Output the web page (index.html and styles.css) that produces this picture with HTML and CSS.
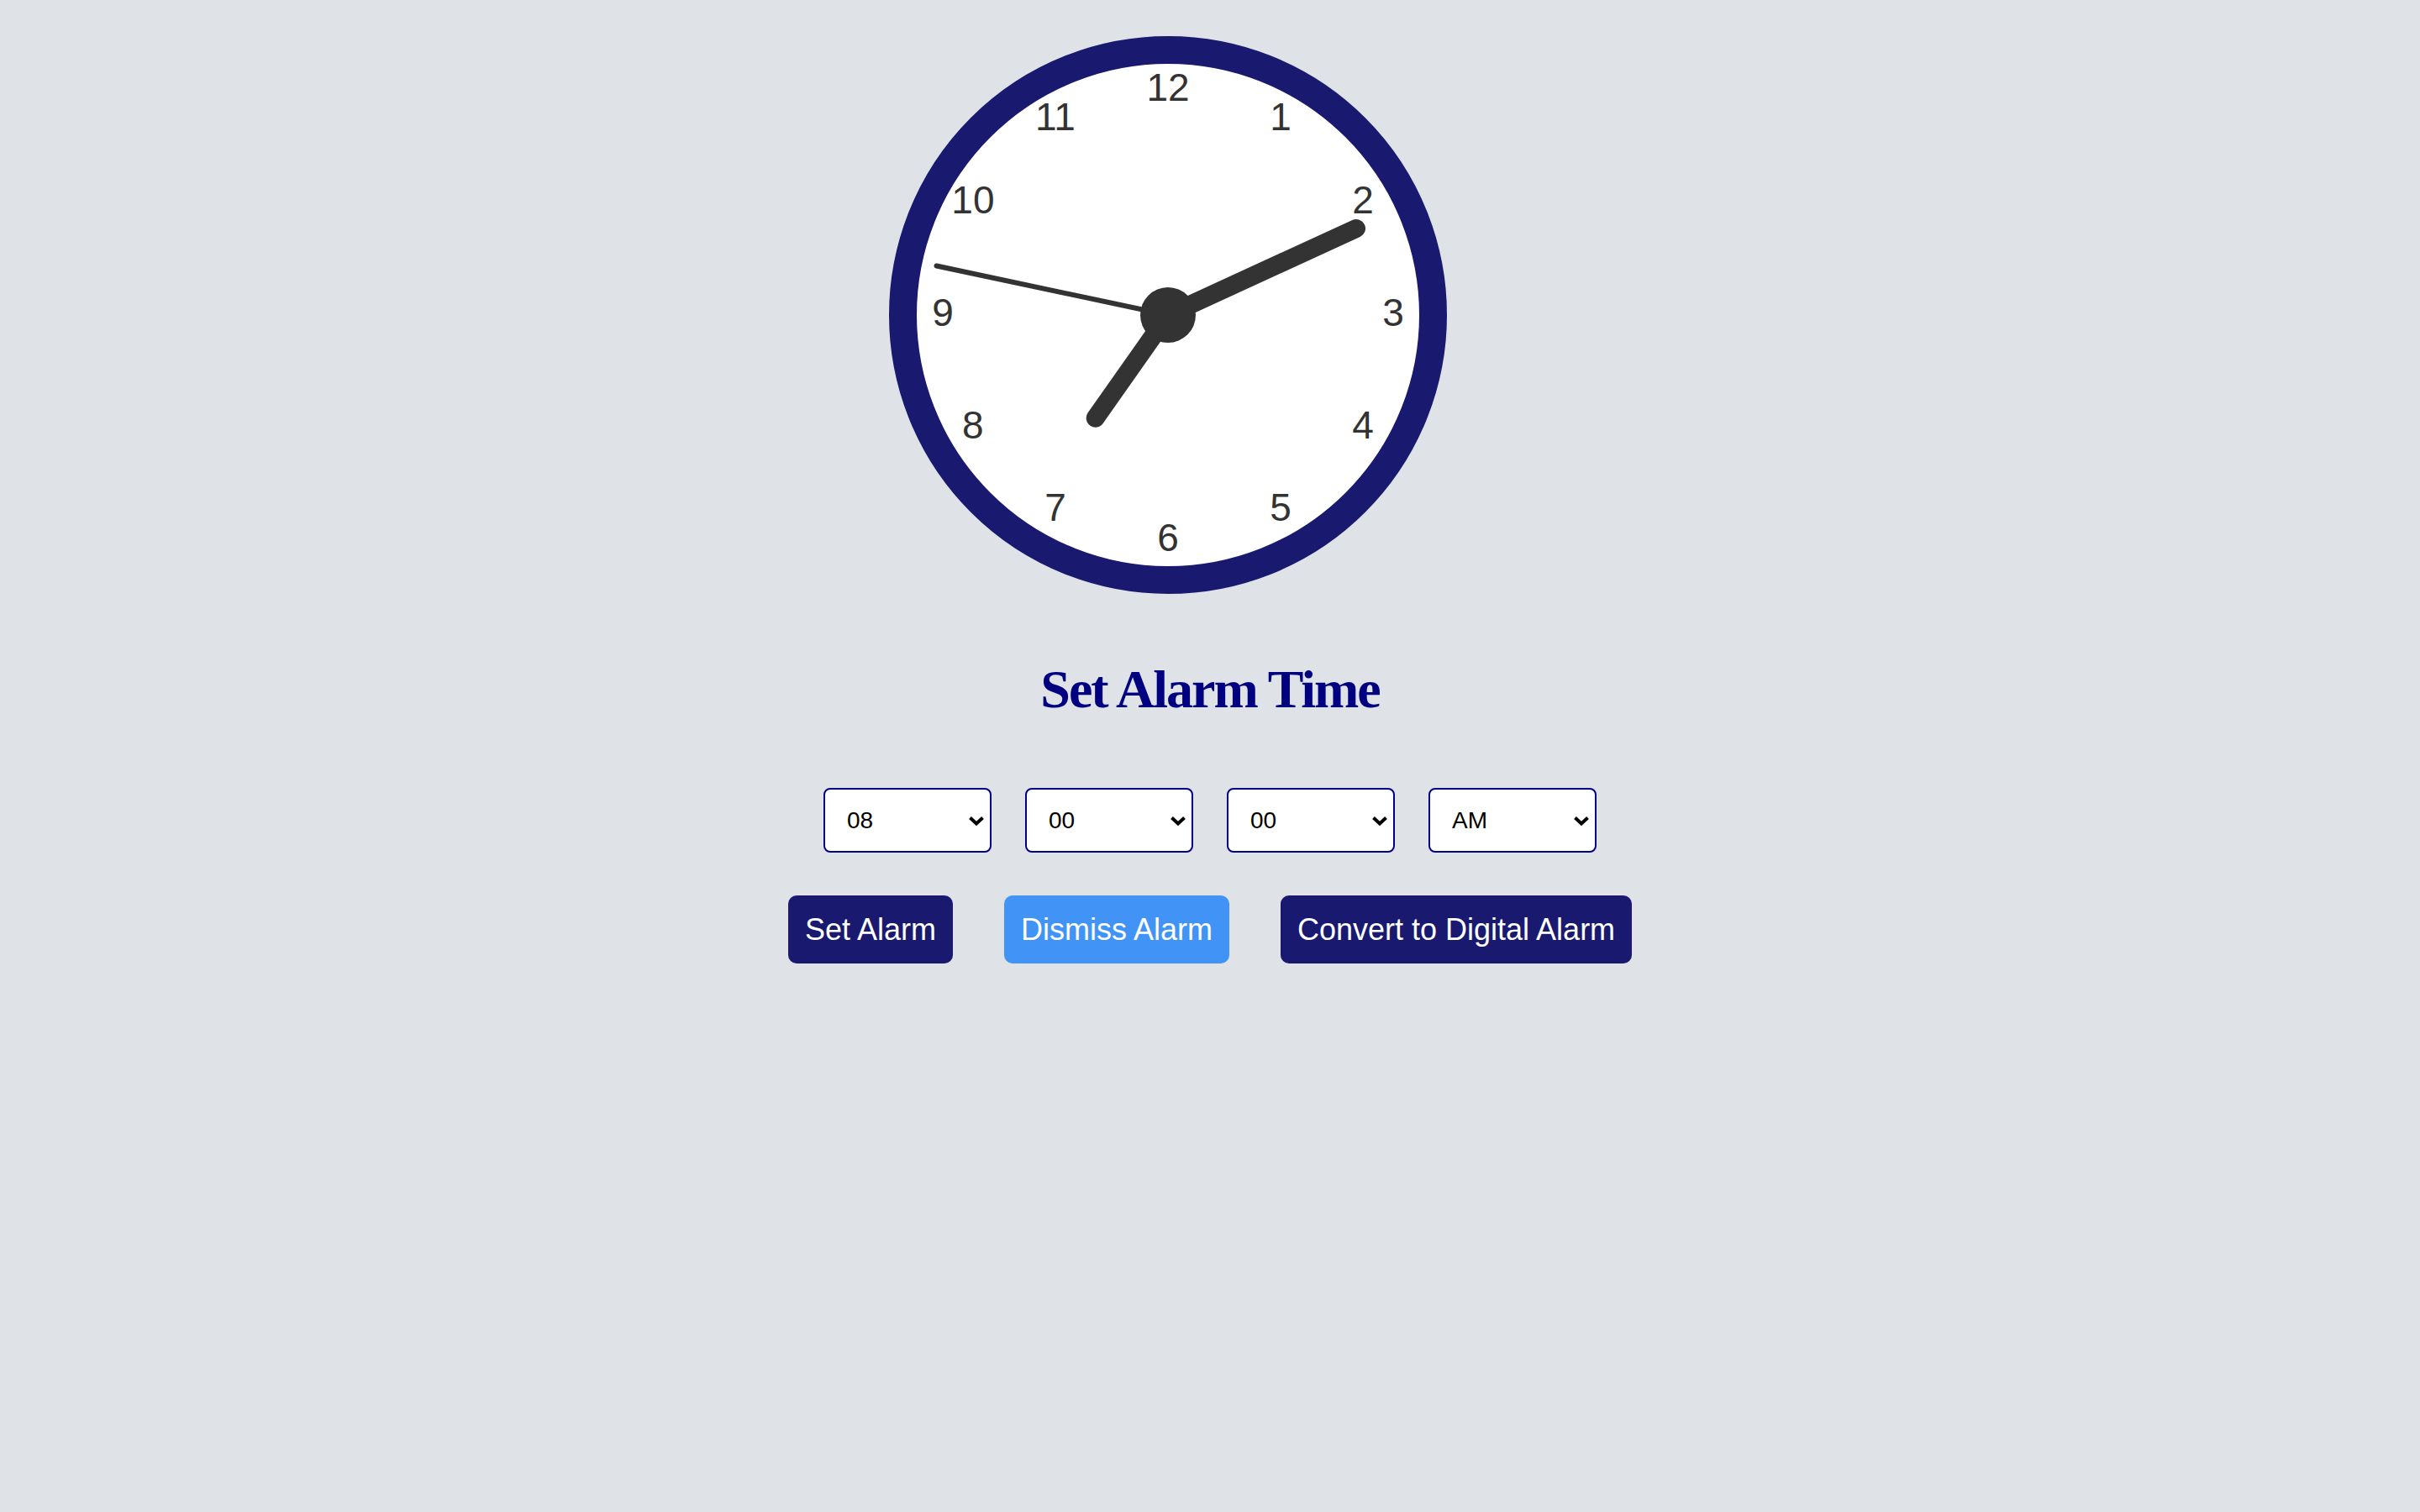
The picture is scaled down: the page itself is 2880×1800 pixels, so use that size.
FILE: index.html
```html
<!DOCTYPE html>
<html lang="en">
<head>
<meta charset="utf-8">
<title>Alarm Clock</title>
<link rel="stylesheet" href="styles.css">
</head>
<body>
<main class="page">
  <div class="clock-row">
    <div class="clock">
      <span class="num n12">12</span>
      <span class="num n1">1</span>
      <span class="num n2">2</span>
      <span class="num n3">3</span>
      <span class="num n4">4</span>
      <span class="num n5">5</span>
      <span class="num n6">6</span>
      <span class="num n7">7</span>
      <span class="num n8">8</span>
      <span class="num n9">9</span>
      <span class="num n10">10</span>
      <span class="num n11">11</span>
      <svg class="hands" viewBox="0 0 598 598" width="598" height="598">
        <line x1="299" y1="299" x2="523" y2="196" stroke="#333" stroke-width="22" stroke-linecap="round"/>
        <line x1="299" y1="299" x2="212.7" y2="421.7" stroke="#333" stroke-width="22" stroke-linecap="round"/>
        <line x1="299" y1="299" x2="23.5" y2="240.5" stroke="#333" stroke-width="6" stroke-linecap="round"/>
        <circle cx="299" cy="299" r="33" fill="#333"/>
      </svg>
    </div>
  </div>

  <h1 class="title">Set Alarm Time</h1>

  <div class="selects">
    <span class="select-wrap">
      <select class="sel"><option>08</option></select>
      <svg class="chev" viewBox="0 0 20 12" width="20" height="12"><path d="M2.5 2.5 L10 9.5 L17.5 2.5" fill="none" stroke="#000" stroke-width="4" stroke-linejoin="miter"/></svg>
    </span>
    <span class="select-wrap">
      <select class="sel"><option>00</option></select>
      <svg class="chev" viewBox="0 0 20 12" width="20" height="12"><path d="M2.5 2.5 L10 9.5 L17.5 2.5" fill="none" stroke="#000" stroke-width="4" stroke-linejoin="miter"/></svg>
    </span>
    <span class="select-wrap">
      <select class="sel"><option>00</option></select>
      <svg class="chev" viewBox="0 0 20 12" width="20" height="12"><path d="M2.5 2.5 L10 9.5 L17.5 2.5" fill="none" stroke="#000" stroke-width="4" stroke-linejoin="miter"/></svg>
    </span>
    <span class="select-wrap">
      <select class="sel"><option>AM</option><option>PM</option></select>
      <svg class="chev" viewBox="0 0 20 12" width="20" height="12"><path d="M2.5 2.5 L10 9.5 L17.5 2.5" fill="none" stroke="#000" stroke-width="4" stroke-linejoin="miter"/></svg>
    </span>
  </div>

  <div class="buttons">
    <button class="btn">Set Alarm</button>
    <button class="btn btn-light">Dismiss Alarm</button>
    <button class="btn">Convert to Digital Alarm</button>
  </div>
</main>
</body>
</html>
```

FILE: styles.css
```css
html, body {
  margin: 0;
  padding: 0;
}

body {
  background: #dfe3e8;
  font-family: "Liberation Sans", Arial, sans-serif;
  min-height: 1800px;
}

.page {
  display: flex;
  flex-direction: column;
  align-items: center;
}

.clock-row {
  width: 100%;
  box-sizing: border-box;
  display: flex;
  justify-content: center;
  padding-top: 43px;
  padding-right: 100px;
}

.clock {
  position: relative;
  width: 664px;
  height: 664px;
  box-sizing: border-box;
  border: 33px solid #191970;
  border-radius: 50%;
  background: #ffffff;
}

.num {
  position: absolute;
  transform: translate(-50%, -50%);
  font-family: "Liberation Sans", Arial, sans-serif;
  font-size: 46px;
  line-height: 1;
  color: #333333;
}

/* centre of face at (299, 299); numerals on radius 268, lifted 3.5px */
.n12 { left: 299px;   top: 27.5px; }
.n1  { left: 433px;   top: 63.4px; }
.n2  { left: 531.1px; top: 161.5px; }
.n3  { left: 567px;   top: 295.5px; }
.n4  { left: 531.1px; top: 429.5px; }
.n5  { left: 433px;   top: 527.6px; }
.n6  { left: 299px;   top: 563.5px; }
.n7  { left: 165px;   top: 527.6px; }
.n8  { left: 66.9px;  top: 429.5px; }
.n9  { left: 31px;    top: 295.5px; }
.n10 { left: 66.9px;  top: 161.5px; }
.n11 { left: 165px;   top: 63.4px; }

.hands {
  position: absolute;
  left: 0;
  top: 0;
}

.title {
  margin: 77px 0 0;
  font-family: "Liberation Serif", "Times New Roman", serif;
  font-weight: bold;
  font-size: 64px;
  line-height: 74px;
  letter-spacing: -2px;
  color: #000080;
  text-align: center;
}

.selects {
  display: flex;
  justify-content: center;
  gap: 40px;
  margin-top: 80px;
}

.select-wrap {
  position: relative;
  display: block;
  width: 200px;
  height: 77px;
}

.sel {
  appearance: none;
  -webkit-appearance: none;
  width: 200px;
  height: 77px;
  box-sizing: border-box;
  border: 2px solid #000080;
  border-radius: 8px;
  background: #ffffff;
  color: #000000;
  font-family: "Liberation Sans", Arial, sans-serif;
  font-size: 28px;
  padding: 0 0 0 26px;
  margin: 0;
  outline: none;
}

.chev {
  position: absolute;
  right: 8px;
  top: 33px;
  pointer-events: none;
}

.buttons {
  display: flex;
  justify-content: center;
  gap: 61px;
  margin-top: 51px;
}

.btn {
  height: 81px;
  padding: 0 20px;
  margin: 0;
  border: none;
  border-radius: 10px;
  background: #191970;
  color: #ffffff;
  font-family: "Liberation Sans", Arial, sans-serif;
  font-size: 36px;
  line-height: 41px;
  cursor: pointer;
}

.btn-light {
  background: #4193f5;
}
```
